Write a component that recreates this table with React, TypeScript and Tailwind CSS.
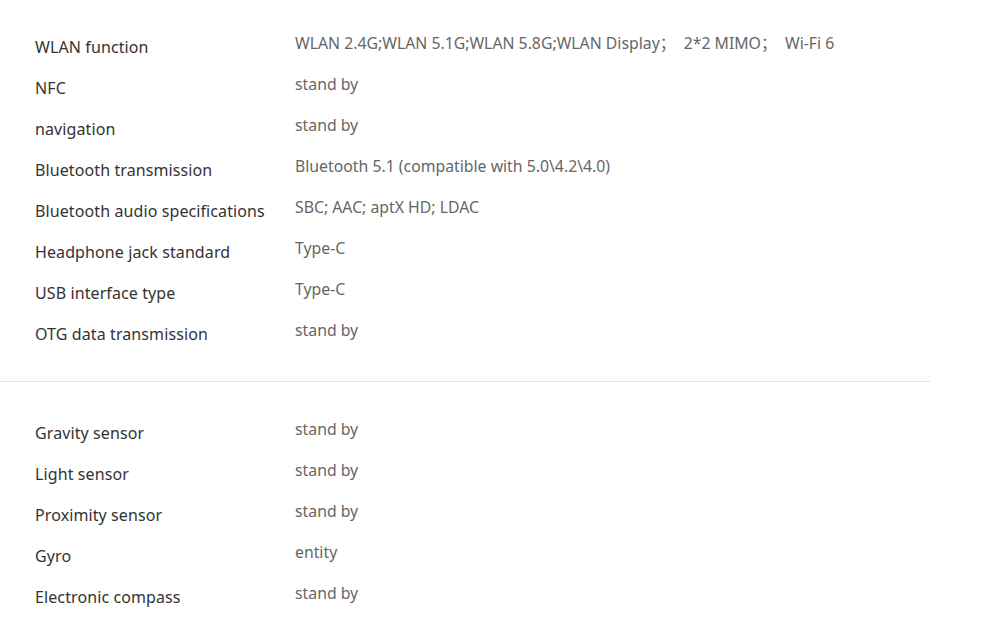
const connectivity: [string, string][] = [
  ['WLAN function', 'WLAN 2.4G;WLAN 5.1G;WLAN 5.8G;WLAN Display；  2*2 MIMO；  Wi-Fi 6'],
  ['NFC', 'stand by'],
  ['navigation', 'stand by'],
  ['Bluetooth transmission', 'Bluetooth 5.1 (compatible with 5.0\\4.2\\4.0)'],
  ['Bluetooth audio specifications', 'SBC; AAC; aptX HD; LDAC'],
  ['Headphone jack standard', 'Type-C'],
  ['USB interface type', 'Type-C'],
  ['OTG data transmission', 'stand by'],
]

const sensors: [string, string][] = [
  ['Gravity sensor', 'stand by'],
  ['Light sensor', 'stand by'],
  ['Proximity sensor', 'stand by'],
  ['Gyro', 'entity'],
  ['Electronic compass', 'stand by'],
]

function SpecRows({ rows }: { rows: [string, string][] }) {
  return (
    <div className="flex flex-col pl-[35px]">
      {rows.map(([label, value]) => (
        <div key={label} className="flex h-[41px] items-center">
          <span className="w-[260px] shrink-0 text-[16px] tracking-[0.1px] text-[#333] pt-[3px]">{label}</span>
          <span className="text-[15.8px] text-[#666] whitespace-pre pb-[3px]">{value}</span>
        </div>
      ))}
    </div>
  )
}

export default function App() {
  return (
    <div
      className="w-[1000px] h-[634px] bg-white overflow-hidden"
      style={{ fontFamily: "'Noto Sans', 'Noto Sans CJK SC', sans-serif" }}
    >
      <div className="pt-[25px]">
        <SpecRows rows={connectivity} />
      </div>
      <div className="mt-[28px] w-[930px] border-t border-[#e3e3e3]" />
      <div className="pt-[29px]">
        <SpecRows rows={sensors} />
      </div>
    </div>
  )
}
